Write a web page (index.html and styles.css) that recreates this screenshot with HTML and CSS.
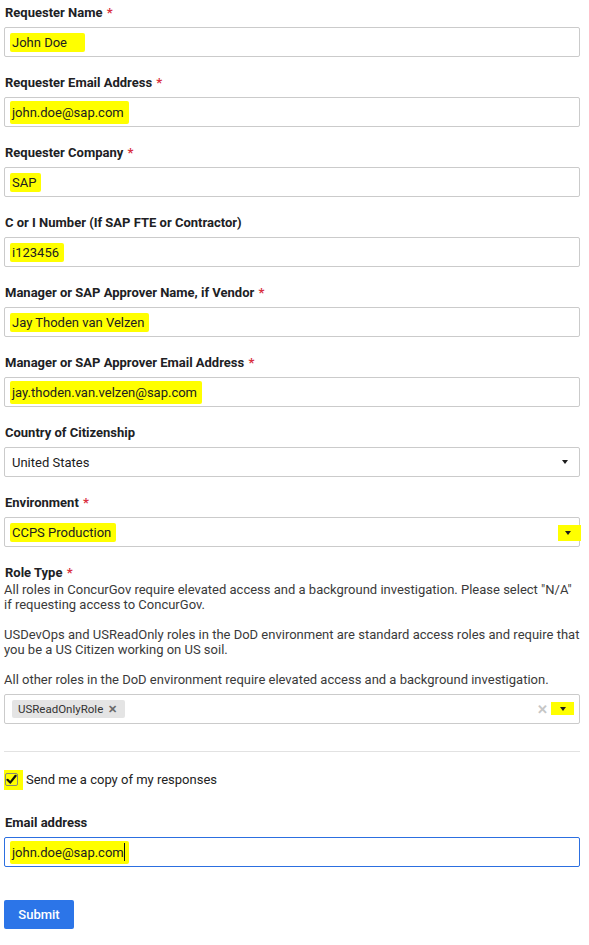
FILE: index.html
```html
<!DOCTYPE html>
<html lang="en">
<head>
<meta charset="utf-8">
<title>Access Request</title>
<link rel="stylesheet" href="styles.css">
</head>
<body>
<form class="form">
  <div class="field">
    <div class="label">Requester Name <span class="req">*</span></div>
    <div class="input"><span class="hl hl-wide">John Doe</span></div>
  </div>
  <div class="field">
    <div class="label">Requester Email Address <span class="req">*</span></div>
    <div class="input"><span class="hl hl-tall">john.doe@sap.com</span></div>
  </div>
  <div class="field">
    <div class="label">Requester Company <span class="req">*</span></div>
    <div class="input"><span class="hl">SAP</span></div>
  </div>
  <div class="field">
    <div class="label">C or I Number (If SAP FTE or Contractor)</div>
    <div class="input"><span class="hl">i123456</span></div>
  </div>
  <div class="field">
    <div class="label">Manager or SAP Approver Name, if Vendor <span class="req">*</span></div>
    <div class="input"><span class="hl">Jay Thoden van Velzen</span></div>
  </div>
  <div class="field">
    <div class="label">Manager or SAP Approver Email Address <span class="req">*</span></div>
    <div class="input"><span class="hl hl-tall">jay.thoden.van.velzen@sap.com</span></div>
  </div>
  <div class="field">
    <div class="label">Country of Citizenship</div>
    <div class="input select">
      <span class="value">United States</span>
      <span class="arrow"></span>
    </div>
  </div>
  <div class="field">
    <div class="label">Environment <span class="req">*</span></div>
    <div class="input select">
      <span class="value"><span class="hl">CCPS Production</span></span>
      <span class="arrow-wrap arrow-wrap-env"><span class="arrow"></span></span>
    </div>
  </div>
  <div class="field">
    <div class="label label-tight">Role Type <span class="req">*</span></div>
    <div class="desc">
      <p>All roles in ConcurGov require elevated access and a background investigation. Please select "N/A" if requesting access to ConcurGov.</p>
      <p>USDevOps and USReadOnly roles in the DoD environment are standard access roles and require that you be a US Citizen working on US soil.</p>
      <p>All other roles in the DoD environment require elevated access and a background investigation.</p>
    </div>
    <div class="input select multi">
      <span class="chips">
        <span class="chip">USReadOnlyRole <span class="chip-x">&#x2715;</span></span>
      </span>
      <span class="clear">&#x2715;</span>
      <span class="arrow-wrap arrow-wrap-multi"><span class="arrow"></span></span>
    </div>
  </div>

  <div class="divider"></div>

  <div class="check-row">
    <span class="check-hl">
      <span class="checkbox">
        <svg width="11" height="11" viewBox="0 0 11 11"><path d="M1.5 5.8 L4.2 8.6 L9.6 1.8" fill="none" stroke="#111" stroke-width="2.2" stroke-linecap="round" stroke-linejoin="round"/></svg>
      </span>
    </span>
    <span class="check-label">Send me a copy of my responses</span>
  </div>

  <div class="field field-email">
    <div class="label">Email address</div>
    <div class="input focused"><span class="hl hl-tall">john.doe@sap.com</span><span class="caret"></span></div>
  </div>

  <div class="actions">
    <button type="button" class="submit">Submit</button>
  </div>
</form>
</body>
</html>
```

FILE: styles.css
```css
* { box-sizing: border-box; }

html, body {
  margin: 0;
  padding: 0;
  background: #ffffff;
}

body {
  font-family: Roboto, "Liberation Sans", Arial, sans-serif;
  font-size: 13px;
  color: #212121;
}

.form {
  padding: 0 9px 0 4px;
  display: flex;
  flex-direction: column;
}

.field {
  padding-top: 3px;
  margin-bottom: 13px;
}

.label {
  font-weight: 700;
  font-size: 13px;
  line-height: 19px;
  color: #202124;
  margin: 0 0 5px 1px;
}

.label-tight { margin-bottom: 0; }

.req {
  color: #d93040;
  margin-left: 1px;
}

.input {
  height: 30px;
  border: 1px solid #cbcbcb;
  border-radius: 2px;
  padding: 0 8px 0 7px;
  display: flex;
  align-items: center;
  font-size: 13px;
  color: #202020;
  background: #fff;
}

.hl {
  background: #ffff00;
  padding: 2px 5px 2px 2px;
  margin-left: -2px;
  border-radius: 2px;
}

.hl-wide { padding-right: 18px; }
.hl-tall { padding-top: 4px; padding-bottom: 4px; }

.select { justify-content: space-between; padding-right: 11px; }

.value { flex: 1; }

.arrow {
  display: block;
  width: 0;
  height: 0;
  border-left: 3.5px solid transparent;
  border-right: 3.5px solid transparent;
  border-top: 4px solid #1c1c1c;
}

.arrow-wrap {
  display: flex;
  align-items: center;
  justify-content: center;
  background: #ffff00;
}

.arrow-wrap-env {
  width: 23px;
  height: 16px;
  margin-right: -13px;
  padding-right: 4px;
  margin-top: 1px;
}

.arrow-wrap-multi {
  width: 23px;
  height: 13px;
  margin-right: -6px;
  margin-top: -2px;
  padding-top: 2px;
}

.multi { padding-left: 7px; }

.chips { flex: 1; display: flex; }

.chip {
  display: inline-flex;
  align-items: center;
  height: 18px;
  width: 113px;
  padding: 0 6px;
  background: #e4e4e4;
  border-radius: 2px;
  font-size: 11.5px;
  color: #333;
  justify-content: space-between;
}

.chip-x {
  font-size: 11px;
  font-weight: 700;
  color: #6a6a6a;
  margin-right: 2px;
}

.clear {
  color: #c6c6c6;
  font-size: 13px;
  font-weight: 700;
  margin-right: 3px;
}

.desc {
  font-size: 13px;
  line-height: 15px;
  color: #3a3a3a;
  margin-bottom: 7px;
}

.desc p { margin: 0 0 15px 0; }
.desc p:last-child { margin-bottom: 0; }

.divider {
  height: 1px;
  background: #e2e2e2;
  margin-top: 14px;
}

.check-row {
  display: flex;
  align-items: center;
  margin-top: 18px;
  height: 19px;
}

.check-hl {
  display: flex;
  align-items: center;
  justify-content: center;
  width: 19px;
  height: 20px;
  background: #ffff00;
  margin-right: 3px;
}

.checkbox {
  display: flex;
  align-items: center;
  justify-content: center;
  width: 13px;
  height: 13px;
  border: 1px solid #8a8a72;
  border-radius: 2px;
  margin-left: -4px;
}

.check-label {
  font-size: 13px;
  color: #222;
}

.field-email { margin-top: 21px; }

.focused { border-color: #2c6fe0; }

.caret {
  display: block;
  width: 1px;
  height: 18px;
  background: #111;
  margin-left: -5px;
}

.actions {
  margin-top: 20px;
}

.submit {
  width: 70px;
  height: 29px;
  border: none;
  border-radius: 2px;
  background: #2c75e8;
  color: #fff;
  font-family: Roboto, "Liberation Sans", Arial, sans-serif;
  font-size: 13px;
  font-weight: 500;
  padding: 0;
}
```
